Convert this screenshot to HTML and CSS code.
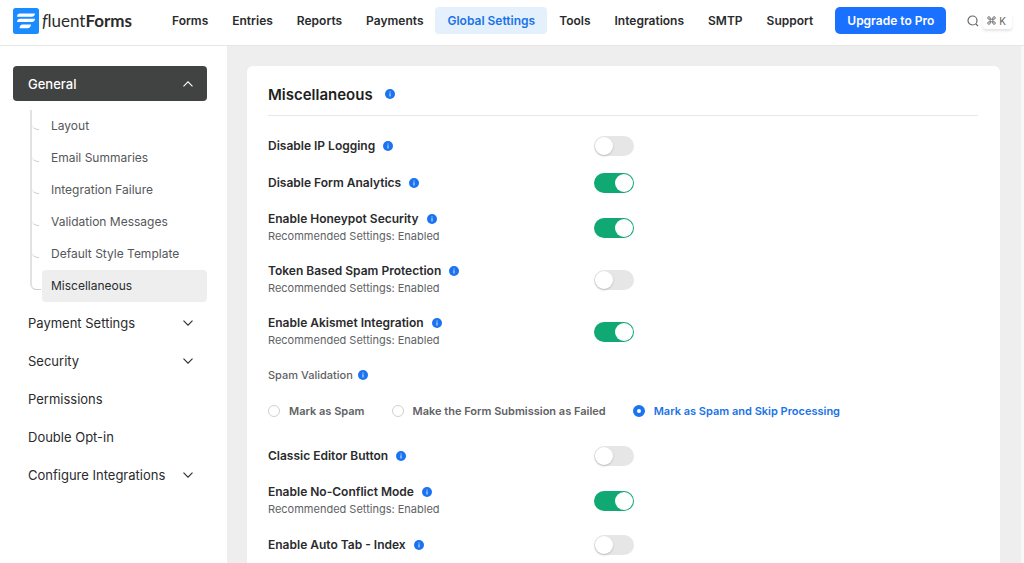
FILE: index.html
```
<!DOCTYPE html>
<html lang="en">
<head>
	<meta charset="utf-8">
	<meta name="viewport" content="width=device-width, initial-scale=1">
	<title>Global Settings - Fluent Forms</title>
	<link rel="stylesheet" href="styles.css">
</head>
<body>

<svg class="defs" width="0" height="0" aria-hidden="true">
	<symbol id="info" viewBox="0 0 10 10">
		<circle cx="5" cy="5" r="5" fill="#1a73f0"/>
		<path d="M5 2.4v1M5 4.3v3.2" stroke="#cfe2ff" stroke-width="1.1"/>
	</symbol>
	<symbol id="chevron" viewBox="0 0 12 12">
		<path d="M1.500 3.700l4.500 4.500 4.500-4.500" fill="none" stroke="currentColor" stroke-width="1.1"/>
	</symbol>
</svg>

<header class="topbar">
	<a class="logo" href="#">
		<svg width="26" height="26" viewBox="0 0 26 26" aria-hidden="true">
			<rect width="26" height="26" rx="2.5" fill="#1a8cff"/>
			<g fill="#fff">
				<path d="M7 5.400h15c-.3 2.200-1.300 3.300-3.200 3.300H4c.3-2.200 1.200-3.300 3-3.300z"/>
				<path d="M7 10.800h15c-.3 2.200-1.300 3.300-3.200 3.300H4c.3-2.200 1.200-3.300 3-3.300z"/>
				<path d="M9.500 16.600h8.500c-.3 2.400-1.400 3.700-3.400 3.700H6.500c.3-2.400 1.200-3.700 3-3.700z"/>
			</g>
		</svg>
		<span class="logo-text"><i>f</i>luent<b>Forms</b></span>
	</a>
	<nav class="menu">
		<a href="#">Forms</a>
		<a href="#">Entries</a>
		<a href="#">Reports</a>
		<a href="#">Payments</a>
		<a href="#" class="active">Global Settings</a>
		<a href="#">Tools</a>
		<a href="#">Integrations</a>
		<a href="#">SMTP</a>
		<a href="#">Support</a>
	</nav>
	<a class="upgrade" href="#">Upgrade to Pro</a>
	<button class="search" type="button" aria-label="Search">
		<svg width="12" height="12" viewBox="0 0 12 12" fill="none" stroke="#666" stroke-width="1.2" aria-hidden="true"><circle cx="5.500" cy="5.500" r="4.500"/><path d="M8.800 8.800l2.200 2.200"/></svg>
		<kbd>
			<svg width="9" height="9" viewBox="0 0 8 8" fill="none" stroke="#666" stroke-width=".8" aria-hidden="true"><path d="M2.800 1.700a1.100 1.100 0 1 0-1.100 1.100h4.600a1.100 1.100 0 1 0-1.100-1.100v4.600a1.100 1.100 0 1 0 1.100-1.100H1.700a1.100 1.100 0 1 0 1.100 1.100z"/></svg>
			K
		</kbd>
	</button>
</header>

<div class="page">
	<aside class="sidebar">
		<button class="side-item open" type="button" aria-expanded="true">General <svg class="chevron"><use href="#chevron"/></svg></button>
		<ul class="submenu">
			<li><a href="#">Layout</a></li>
			<li><a href="#">Email Summaries</a></li>
			<li><a href="#">Integration Failure</a></li>
			<li><a href="#">Validation Messages</a></li>
			<li><a href="#">Default Style Template</a></li>
			<li><a href="#" class="active">Miscellaneous</a></li>
		</ul>
		<button class="side-item" type="button">Payment Settings <svg class="chevron"><use href="#chevron"/></svg></button>
		<button class="side-item" type="button">Security <svg class="chevron"><use href="#chevron"/></svg></button>
		<a class="side-item" href="#">Permissions</a>
		<a class="side-item" href="#">Double Opt-in</a>
		<button class="side-item" type="button">Configure Integrations <svg class="chevron"><use href="#chevron"/></svg></button>
	</aside>

	<main class="content">
		<form class="card">
			<div class="card-head">
				<h1>Miscellaneous</h1>
				<svg class="info"><use href="#info"/></svg>
			</div>

			<div class="settings">
				<div class="row">
					<div class="title"><label for="ip">Disable IP Logging</label><svg class="info"><use href="#info"/></svg></div>
					<input class="switch" type="checkbox" role="switch" id="ip">
				</div>
				<div class="row">
					<div class="title"><label for="analytics">Disable Form Analytics</label><svg class="info"><use href="#info"/></svg></div>
					<input class="switch" type="checkbox" role="switch" id="analytics" checked>
				</div>
				<div class="row">
					<div>
						<div class="title"><label for="honeypot">Enable Honeypot Security</label><svg class="info"><use href="#info"/></svg></div>
						<p class="hint">Recommended Settings: Enabled</p>
					</div>
					<input class="switch" type="checkbox" role="switch" id="honeypot" checked>
				</div>
				<div class="row">
					<div>
						<div class="title"><label for="token">Token Based Spam Protection</label><svg class="info"><use href="#info"/></svg></div>
						<p class="hint">Recommended Settings: Enabled</p>
					</div>
					<input class="switch" type="checkbox" role="switch" id="token">
				</div>
				<div class="row">
					<div>
						<div class="title"><label for="akismet">Enable Akismet Integration</label><svg class="info"><use href="#info"/></svg></div>
						<p class="hint">Recommended Settings: Enabled</p>
					</div>
					<input class="switch" type="checkbox" role="switch" id="akismet" checked>
				</div>

				<fieldset class="validation">
					<legend>Spam Validation <svg class="info"><use href="#info"/></svg></legend>
					<div class="radios">
						<label><input type="radio" name="spam"> Mark as Spam</label>
						<label><input type="radio" name="spam"> Make the Form Submission as Failed</label>
						<label><input type="radio" name="spam" checked> Mark as Spam and Skip Processing</label>
					</div>
				</fieldset>

				<div class="row">
					<div class="title"><label for="classic">Classic Editor Button</label><svg class="info"><use href="#info"/></svg></div>
					<input class="switch" type="checkbox" role="switch" id="classic">
				</div>
				<div class="row">
					<div>
						<div class="title"><label for="conflict">Enable No-Conflict Mode</label><svg class="info"><use href="#info"/></svg></div>
						<p class="hint">Recommended Settings: Enabled</p>
					</div>
					<input class="switch" type="checkbox" role="switch" id="conflict" checked>
				</div>
				<div class="row">
					<div class="title"><label for="autotab">Enable Auto Tab - Index</label><svg class="info"><use href="#info"/></svg></div>
					<input class="switch" type="checkbox" role="switch" id="autotab">
				</div>
			</div>
		</form>
	</main>
</div>

</body>
</html>
```
FILE: styles.css
```
* {
	box-sizing: border-box;
}

html, body {
	height: 100%;
}

body {
	margin: 0;
	display: flex;
	flex-direction: column;
	overflow: hidden;
	font-family: Inter, "Liberation Sans", sans-serif;
	font-size: 12px;
	color: #2a2b2d;
	background: #fff;
}

a {
	color: inherit;
	text-decoration: none;
}

button {
	font: inherit;
	color: inherit;
	border: 0;
	background: none;
	cursor: pointer;
}

.defs {
	display: none;
}

.info {
	width: 10px;
	height: 10px;
	flex: none;
}

/* top bar */
.topbar {
	display: flex;
	align-items: center;
	flex: none;
	height: 46px;
	padding: 0 12px 4px 13px;
	border-bottom: 1px solid #e6e6e6;
	white-space: nowrap;
}

.logo {
	display: flex;
	align-items: center;
	gap: 3px;
	width: 147px;
}

.logo-text {
	font-family: Lato, sans-serif;
	font-size: 17px;
	line-height: 24px;
	color: #2b2b2b;
}

.menu {
	display: flex;
	flex: 1;
	font-weight: 600;
}

.menu a {
	padding: 0 12px;
	line-height: 27px;
	border-radius: 4px;
}

.menu .active {
	color: #1a73e8;
	background: #e5f0fd;
}

.upgrade {
	padding: 0 12px;
	line-height: 27px;
	font-weight: 600;
	color: #fff;
	background: #1a70ff;
	border-radius: 5px;
}

.search {
	display: flex;
	align-items: center;
	gap: 4px;
	margin-left: 21px;
	padding: 0;
}

kbd {
	display: flex;
	align-items: center;
	gap: 3px;
	padding: 0 6px 0 4px;
	font: 10px/16px Inter, sans-serif;
	color: #666;
	border-radius: 3px;
	box-shadow: 0 2px 3px #e4e4e4;
}

/* layout under the bar */
.page {
	display: flex;
	flex: 1;
	min-height: 0;
}

.sidebar {
	flex: none;
	width: 227px;
	padding: 20px 20px 0 13px;
}

.side-item {
	display: flex;
	align-items: center;
	justify-content: space-between;
	width: 100%;
	height: 38px;
	padding: 0 13px 0 15px;
	font-size: 13px;
	border-radius: 4px;
}

.side-item.open {
	height: 35px;
	font-weight: 500;
	color: #fff;
	background: #414242;
}

.chevron {
	width: 12px;
	height: 12px;
}

.open .chevron {
	transform: rotate(180deg);
}

.submenu {
	list-style: none;
	margin: 9px 0 2px;
	padding: 0 0 0 17px;
	font-size: 12px;
	color: #55575a;
}

.submenu li {
	position: relative;
	padding-left: 10px;
	border-left: 2px solid #e2e2e2;
}

.submenu li:last-child {
	border-color: transparent;
}

/* small branch from the tree line to each entry */
.submenu li::before {
	content: "";
	position: absolute;
	left: 0;
	top: 14px;
	width: 7px;
	height: 5px;
	border-bottom: 1px solid #ccc;
	border-bottom-left-radius: 6px;
}

.submenu li:last-child::before {
	left: -2px;
	top: 0;
	width: 9px;
	height: 19px;
	border-left: 2px solid #e2e2e2;
}

.submenu a {
	display: block;
	padding-left: 9px;
	line-height: 32px;
	border-radius: 4px;
}

.submenu .active {
	color: #2a2b2d;
	background: #eee;
}

.content {
	flex: 1;
	min-width: 0;
	padding: 20px 21px 0 20px;
	background: #eee;
	border-right: 3px solid #f8f8f8;
}

.card {
	min-height: 100%;
	padding: 0 22px 20px 21px;
	background: #fff;
	border-radius: 6px;
}

.card-head {
	display: flex;
	align-items: center;
	gap: 12px;
	height: 50px;
	padding-top: 7px;
	border-bottom: 1px solid #e8e8e8;
}

h1 {
	margin: 0;
	font-size: 15px;
	font-weight: 600;
	color: #1e1f21;
}

.settings {
	display: flex;
	flex-direction: column;
	gap: 17px;
	padding-top: 20px;
}

.row {
	display: grid;
	grid-template-columns: 17fr 20fr;
	align-items: center;
}

.title {
	display: flex;
	align-items: center;
	gap: 8px;
	line-height: 18px;
	font-weight: 600;
}

.hint {
	margin: 0;
	font-size: 11px;
	line-height: 17px;
	color: #606265;
}

.switch {
	appearance: none;
	display: flex;
	align-items: center;
	width: 40px;
	height: 20px;
	margin: 0;
	padding: 1px;
	border-radius: 10px;
	background: #e6e6e6;
}

.switch::before {
	content: "";
	width: 18px;
	height: 18px;
	border-radius: 50%;
	background: #fff;
	box-shadow: 0 1px 2px #bbb;
}

.switch:checked {
	justify-content: flex-end;
	background: #10a873;
}

.switch:checked::before {
	box-shadow: none;
}

.validation {
	margin: 0;
	padding: 0 0 9px;
	border: 0;
	color: #606265;
}

.validation legend {
	display: flex;
	align-items: center;
	gap: 5px;
	padding: 0;
	font-size: 11px;
	font-weight: 500;
	line-height: 18px;
}

.radios {
	display: flex;
	gap: 27px;
	margin-top: 18px;
	font-size: 11px;
	font-weight: 600;
	line-height: 18px;
}

.radios label {
	display: flex;
	align-items: center;
	gap: 9px;
}

.radios label:has(:checked) {
	color: #1a73e8;
}

.radios input {
	appearance: none;
	width: 12px;
	height: 12px;
	margin: 0;
	border: 1px solid #d0d0d0;
	border-radius: 50%;
}

.radios input:checked {
	border: 4px solid #1a73f0;
}
```
